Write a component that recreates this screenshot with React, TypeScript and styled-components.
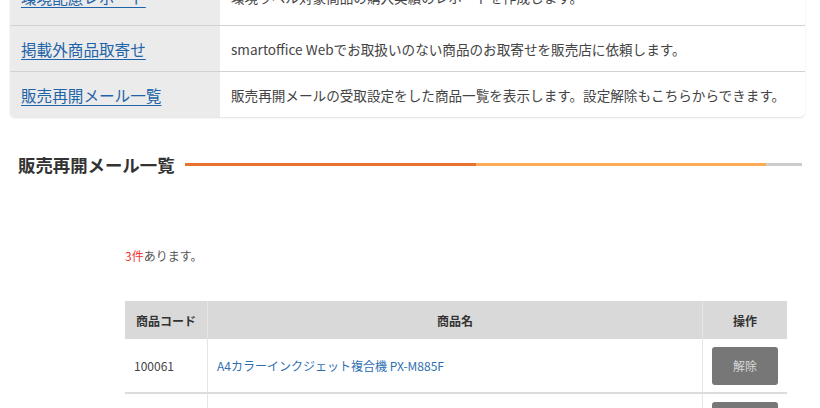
import styled, { createGlobalStyle } from "styled-components"

const GlobalStyle = createGlobalStyle`
  html, body {
    margin: 0;
    padding: 0;
    background: #fff;
    width: 820px;
    height: 408px;
    overflow: hidden;
  }
  body {
    font-family: "Noto Sans CJK JP", "Noto Sans", sans-serif;
    color: #333;
  }
`

const Page = styled.div`
  width: 820px;
`

const MenuTable = styled.div`
  margin: -21px 15px 0 10px;
  border-radius: 0 0 5px 5px;
  box-shadow: 0 1px 2px rgba(0, 0, 0, 0.12);
  overflow: hidden;
`

const MenuRow = styled.div`
  display: grid;
  grid-template-columns: 210px 1fr;
  height: 45px;
  border-bottom: 1px solid #d2d2d2;
  &:first-child {
    height: 46px;
  }
  &:first-child > * {
    padding-bottom: 10px;
  }
  &:last-child {
    border-bottom: none;
  }
`

const MenuLabel = styled.div`
  background: #ebebeb;
  display: flex;
  align-items: center;
  padding-left: 11px;
`

const MenuLink = styled.a`
  font-size: 15.6px;
  color: #1f64a8;
  text-decoration: underline;
  text-underline-offset: 3px;
`

const MenuDesc = styled.div`
  display: flex;
  align-items: center;
  padding-left: 11px;
  font-size: 13.6px;
  color: #444;
`

const SectionHead = styled.div`
  display: flex;
  align-items: center;
  margin: 35px 18px 0 18px;
  gap: 10px;
`

const HeadTitle = styled.h2`
  margin: 0;
  font-size: 17.4px;
  font-weight: bold;
  color: #333;
  white-space: nowrap;
`

const HeadLine = styled.div`
  flex: 1;
  display: flex;
  height: 3px;
`

const LineSeg = styled.div<{ $color: string; $grow: number }>`
  flex: ${(p) => p.$grow};
  background: ${(p) => p.$color};
`

const Content = styled.div`
  margin: 0 33px 0 125px;
`

const Count = styled.p`
  margin: 67px 0 0;
  font-size: 12px;
  color: #555;
  height: 24px;
  line-height: 24px;
`

const Red = styled.span`
  color: #f2332f;
`

const Table = styled.table`
  margin-top: 33px;
  width: 100%;
  border-collapse: collapse;
  font-size: 12px;
`

const Th = styled.th<{ $w?: number }>`
  background: #d9d9d9;
  height: 38px;
  padding: 0;
  font-weight: bold;
  color: #333;
  border-left: 1px solid #e6e6e6;
  width: ${(p) => (p.$w ? `${p.$w}px` : "auto")};
  &:first-child {
    border-left: none;
  }
`

const Td = styled.td<{ $center?: boolean }>`
  height: 53px;
  padding: 0 9px;
  border-left: 1px solid #e6e6e6;
  border-bottom: 2px solid #dcdcdc;
  color: #444;
  text-align: ${(p) => (p.$center ? "center" : "left")};
  &:first-child {
    border-left: none;
  }
`

const ItemLink = styled.a`
  color: #2f6fb0;
  text-decoration: none;
`

const RemoveButton = styled.button`
  width: 66px;
  height: 38px;
  border: none;
  border-radius: 3px;
  background: #777;
  color: #d8d8d8;
  font-family: inherit;
  font-size: 12px;
  vertical-align: middle;
`

const menus = [
  { label: "環境配慮レポート", desc: "環境ラベル対象商品の購入実績のレポートを作成します。" },
  { label: "掲載外商品取寄せ", desc: "smartoffice Webでお取扱いのない商品のお取寄せを販売店に依頼します。" },
  { label: "販売再開メール一覧", desc: "販売再開メールの受取設定をした商品一覧を表示します。設定解除もこちらからできます。" },
]

const items = [
  { code: "100061", name: "A4カラーインクジェット複合機 PX-M885F" },
  { code: "100062", name: "A4カラーインクジェット複合機 PX-M886FL" },
]

export default function App() {
  return (
    <Page>
      <GlobalStyle />
      <MenuTable>
        {menus.map((m) => (
          <MenuRow key={m.label}>
            <MenuLabel>
              <MenuLink href="#">{m.label}</MenuLink>
            </MenuLabel>
            <MenuDesc>{m.desc}</MenuDesc>
          </MenuRow>
        ))}
      </MenuTable>

      <SectionHead>
        <HeadTitle>販売再開メール一覧</HeadTitle>
        <HeadLine>
          <LineSeg $color="#e9722f" $grow={292} />
          <LineSeg $color="#ffab55" $grow={291} />
          <LineSeg $color="#cccccc" $grow={36} />
        </HeadLine>
      </SectionHead>

      <Content>
        <Count>
          <Red>3件</Red>あります。
        </Count>
        <Table>
          <thead>
            <tr>
              <Th $w={82}>商品コード</Th>
              <Th>商品名</Th>
              <Th $w={84}>操作</Th>
            </tr>
          </thead>
          <tbody>
            {items.map((it) => (
              <tr key={it.code}>
                <Td>{it.code}</Td>
                <Td>
                  <ItemLink href="#">{it.name}</ItemLink>
                </Td>
                <Td $center>
                  <RemoveButton>解除</RemoveButton>
                </Td>
              </tr>
            ))}
          </tbody>
        </Table>
      </Content>
    </Page>
  )
}
